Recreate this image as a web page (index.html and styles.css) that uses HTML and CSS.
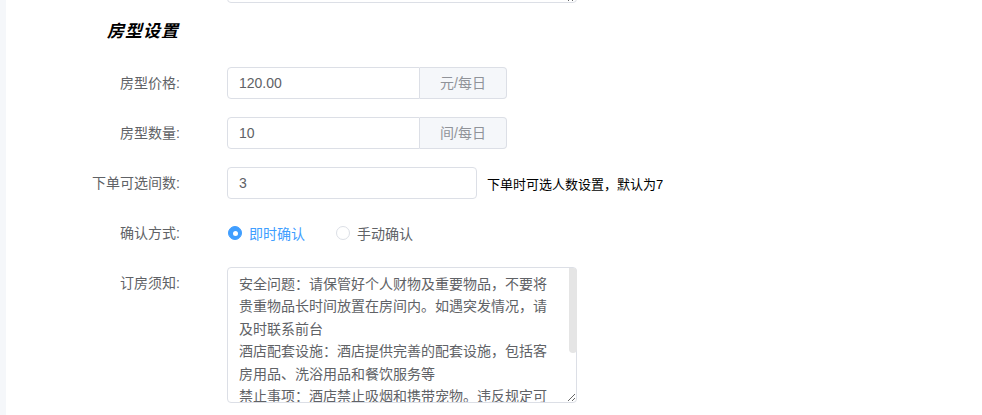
FILE: index.html
```html
<!DOCTYPE html>
<html lang="zh-CN">
<head>
  <meta charset="UTF-8" />
  <title>房型设置</title>
  <meta name="viewport" content="width=device-width, initial-scale=1.0" />
  <link rel="stylesheet" href="styles.css">
</head>
<body>
  <div class="side-strip"></div>

  <div class="main">
    <!-- tail of the previous section's textarea -->
    <div class="prev-row">
      <textarea class="textarea prev-textarea" readonly></textarea>
    </div>

    <h3 class="section-title">房型设置</h3>

    <form class="form">
      <div class="form-item">
        <label class="item-label">房型价格:</label>
        <div class="item-content">
          <div class="input-group">
            <input type="text" class="input" value="120.00" />
            <span class="append">元/每日</span>
          </div>
        </div>
      </div>

      <div class="form-item">
        <label class="item-label">房型数量:</label>
        <div class="item-content">
          <div class="input-group">
            <input type="text" class="input" value="10" />
            <span class="append">间/每日</span>
          </div>
        </div>
      </div>

      <div class="form-item">
        <label class="item-label">下单可选间数:</label>
        <div class="item-content">
          <input type="text" class="input input-short" value="3" />
          <span class="hint">下单时可选人数设置，默认为7</span>
        </div>
      </div>

      <div class="form-item">
        <label class="item-label">确认方式:</label>
        <div class="item-content">
          <label class="radio checked">
            <span class="radio-dot"></span>
            <span class="radio-text">即时确认</span>
          </label>
          <label class="radio">
            <span class="radio-dot"></span>
            <span class="radio-text">手动确认</span>
          </label>
        </div>
      </div>

      <div class="form-item">
        <label class="item-label">订房须知:</label>
        <div class="item-content">
          <div class="textarea-wrap">
            <textarea class="textarea notice" readonly>安全问题：请保管好个人财物及重要物品，不要将贵重物品长时间放置在房间内。如遇突发情况，请及时联系前台
酒店配套设施：酒店提供完善的配套设施，包括客房用品、洗浴用品和餐饮服务等
禁止事项：酒店禁止吸烟和携带宠物。违反规定可能会产生额外费用
退房时间：每日中午12点前办理退房手续</textarea>
            <span class="scroll-thumb"></span>
          </div>
        </div>
      </div>
    </form>
  </div>
</body>
</html>
```

FILE: styles.css
```css
* {
  box-sizing: border-box;
}
html, body {
  margin: 0;
  padding: 0;
  height: 100vh;
  overflow: hidden;
  background: #fff;
  font-family: "Liberation Sans", "Noto Sans CJK SC", sans-serif;
  font-size: 14px;
  color: #606266;
}
body {
  display: flex;
}
.side-strip {
  width: 6px;
  flex-shrink: 0;
  background: #f5f7fa;
}
.main {
  flex: 1;
}
.prev-row {
  height: 3px;
  overflow: hidden;
  display: flex;
  align-items: flex-end;
  padding-left: 221px;
}
.prev-textarea {
  height: 80px;
}
.section-title {
  margin: 17px 0 23px 101px;
  font-size: 17px;
  line-height: 24px;
  font-weight: bold;
  font-style: italic;
  letter-spacing: 1px;
  color: #000;
}
.form-item {
  display: flex;
  margin-bottom: 18px;
}
.item-label {
  width: 186px;
  padding-right: 12px;
  text-align: right;
  line-height: 32px;
  color: #606266;
  flex-shrink: 0;
}
.item-content {
  margin-left: 35px;
  display: flex;
  align-items: center;
  min-height: 32px;
}
.input-group {
  display: flex;
  width: 280px;
}
.input {
  height: 32px;
  width: 100%;
  padding: 0 11px;
  border: 1px solid #dcdfe6;
  border-radius: 4px;
  font-family: inherit;
  font-size: 14px;
  color: #606266;
  outline: none;
  background: #fff;
}
.input-group .input {
  border-radius: 4px 0 0 4px;
  flex: 1;
}
.append {
  width: 87px;
  height: 32px;
  line-height: 30px;
  text-align: center;
  background: #f5f7fa;
  color: #909399;
  border: 1px solid #dcdfe6;
  border-left: none;
  border-radius: 0 4px 4px 0;
}
.input-short {
  width: 250px;
}
.hint {
  margin-left: 10px;
  font-size: 13px;
  color: #000;
}
.radio {
  display: flex;
  align-items: center;
  margin-right: 30px;
  cursor: pointer;
}
.radio-dot {
  width: 14px;
  height: 14px;
  border: 1px solid #dcdfe6;
  border-radius: 50%;
  background: #fff;
  margin-left: 1px;
  display: flex;
  align-items: center;
  justify-content: center;
}
.radio-text {
  padding-left: 7px;
  color: #606266;
}
.radio.checked .radio-dot {
  background: #409eff;
  border-color: #409eff;
}
.radio.checked .radio-dot::after {
  content: "";
  width: 5px;
  height: 5px;
  border-radius: 50%;
  background: #fff;
}
.radio.checked .radio-text {
  color: #409eff;
}
.textarea {
  display: block;
  width: 350px;
  padding: 5px 11px;
  border: 1px solid #dcdfe6;
  border-radius: 4px;
  font-family: inherit;
  font-size: 14px;
  line-height: 1.6;
  color: #606266;
  resize: vertical;
  outline: none;
}
.textarea-wrap {
  position: relative;
}
.notice {
  height: 136px;
  padding-right: 25px;
  overflow-y: hidden;
}
.scroll-thumb {
  position: absolute;
  top: 1px;
  right: 0;
  width: 8px;
  height: 85px;
  background: #e5e5e5;
  border-radius: 0 4px 4px 4px;
}
```
